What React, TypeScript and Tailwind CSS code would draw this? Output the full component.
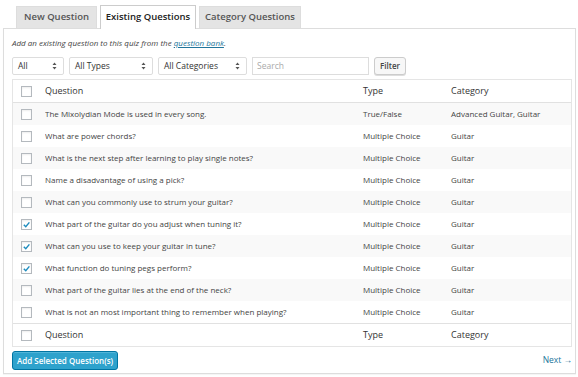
import React from "react";

const rows: [string, string, string, boolean][] = [
  ["The Mixolydian Mode is used in every song.", "True/False", "Advanced Guitar, Guitar", false],
  ["What are power chords?", "Multiple Choice", "Guitar", false],
  ["What is the next step after learning to play single notes?", "Multiple Choice", "Guitar", false],
  ["Name a disadvantage of using a pick?", "Multiple Choice", "Guitar", false],
  ["What can you commonly use to strum your guitar?", "Multiple Choice", "Guitar", false],
  ["What part of the guitar do you adjust when tuning it?", "Multiple Choice", "Guitar", true],
  ["What can you use to keep your guitar in tune?", "Multiple Choice", "Guitar", true],
  ["What function do tuning pegs perform?", "Multiple Choice", "Guitar", true],
  ["What part of the guitar lies at the end of the neck?", "Multiple Choice", "Guitar", false],
  ["What is not an most important thing to remember when playing?", "Multiple Choice", "Guitar", false],
];

function Check({ checked }: { checked: boolean }) {
  return (
    <div className="w-[11px] h-[11px] border border-[#b4b9be] bg-white shadow-[inset_0_1px_2px_rgba(0,0,0,0.07)] flex items-center justify-center">
      {checked && (
        <svg width="9" height="9" viewBox="0 0 10 10">
          <path d="M2 5.2 L4.2 7.4 L8.2 2.6" fill="none" stroke="#1e8cbe" strokeWidth="1.6" />
        </svg>
      )}
    </div>
  );
}

function Select({ label, w }: { label: string; w: string }) {
  return (
    <div className={`${w} h-[18px] border border-[#ddd] rounded-[2px] bg-white flex items-center justify-between pl-[5px] pr-[6px] text-[8.5px] text-[#333]`}>
      <span>{label}</span>
      <svg width="5" height="8" viewBox="0 0 5 8">
        <path d="M0.5 3 L2.5 0.5 L4.5 3 Z M0.5 5 L2.5 7.5 L4.5 5 Z" fill="#555" />
      </svg>
    </div>
  );
}

function Row({ q, t, c, checked, grey, header }: { q: string; t: string; c: string; checked: boolean; grey?: boolean; header?: boolean }) {
  return (
    <div className={`flex items-center h-[22px] ${grey ? "bg-[#f9f9f9]" : "bg-white"} ${header ? "text-[9px] text-[#333]" : "text-[8px] text-[#444]"}`}>
      <div className="w-[32px] pl-[8px] flex items-center">
        <Check checked={checked} />
      </div>
      <div className="w-[318px] truncate">{q}</div>
      <div className="w-[88px]">{t}</div>
      <div className="flex-1">{c}</div>
    </div>
  );
}

export default function App() {
  return (
    <div className="w-[578px] h-[377px] bg-white overflow-hidden" style={{ fontFamily: '"Open Sans", sans-serif' }}>
      <div className="flex items-end h-[28px] pl-[16px] gap-[3px]">
        <div className="w-[81px] h-[22px] bg-[#e4e4e4] border border-[#ddd] border-b-0 flex items-center justify-center text-[9.5px] font-semibold text-[#555]">New Question</div>
        <div className="w-[96px] h-[24px] bg-white border border-[#ccc] border-b-0 mb-[-1px] relative z-10 flex items-center justify-center text-[9.5px] font-semibold text-[#222]">Existing Questions</div>
        <div className="w-[102px] h-[22px] bg-[#e4e4e4] border border-[#ddd] border-b-0 flex items-center justify-center text-[9.5px] font-semibold text-[#555]">Category Questions</div>
      </div>
      <div className="ml-[3px] mr-[2px] border border-[#ddd] h-[346px] pl-[8px] pr-[4px] shadow-[0_1px_1px_rgba(0,0,0,0.04)]">
        <div className="mt-[8px] text-[8px] italic text-[#444] leading-[12px]">
          Add an existing question to this quiz from the <span className="text-[#21759b] underline">question bank</span>.
        </div>
        <div className="mt-[8px] flex items-center gap-[5px]">
          <Select label="All" w="w-[52px]" />
          <Select label="All Types" w="w-[84px]" />
          <Select label="All Categories" w="w-[89px]" />
          <div className="w-[117px] h-[18px] border border-[#ddd] bg-white flex items-center px-[4px] text-[8.5px] text-[#aaa]">Search</div>
          <div className="w-[32px] h-[18px] border border-[#ccc] rounded-[3px] bg-[#f7f7f7] flex items-center justify-center text-[8px] font-semibold text-[#444] shadow-[0_1px_0_#ddd]">Filter</div>
        </div>
        <div className="mt-[4px] border border-[#e5e5e5] w-[560px]">
          <div className="border-b border-[#e1e1e1]">
            <Row q="Question" t="Type" c="Category" checked={false} header />
          </div>
          {rows.map((r, i) => (
            <Row key={i} q={r[0]} t={r[1]} c={r[2]} checked={r[3]} grey={i % 2 === 0} />
          ))}
          <div className="border-t border-[#e1e1e1]">
            <Row q="Question" t="Type" c="Category" checked={false} header />
          </div>
        </div>
        <div className="mt-[4px] flex items-center justify-between w-[560px]">
          <div className="w-[106px] h-[19px] bg-[#2ea2cc] border border-[#0074a2] rounded-[3px] flex items-center justify-center text-[8px] font-semibold text-white shadow-[inset_0_1px_0_rgba(120,200,230,0.5)]">Add Selected Question(s)</div>
          <div className="text-[8.5px] text-[#21759b]">Next →</div>
        </div>
      </div>
    </div>
  );
}
